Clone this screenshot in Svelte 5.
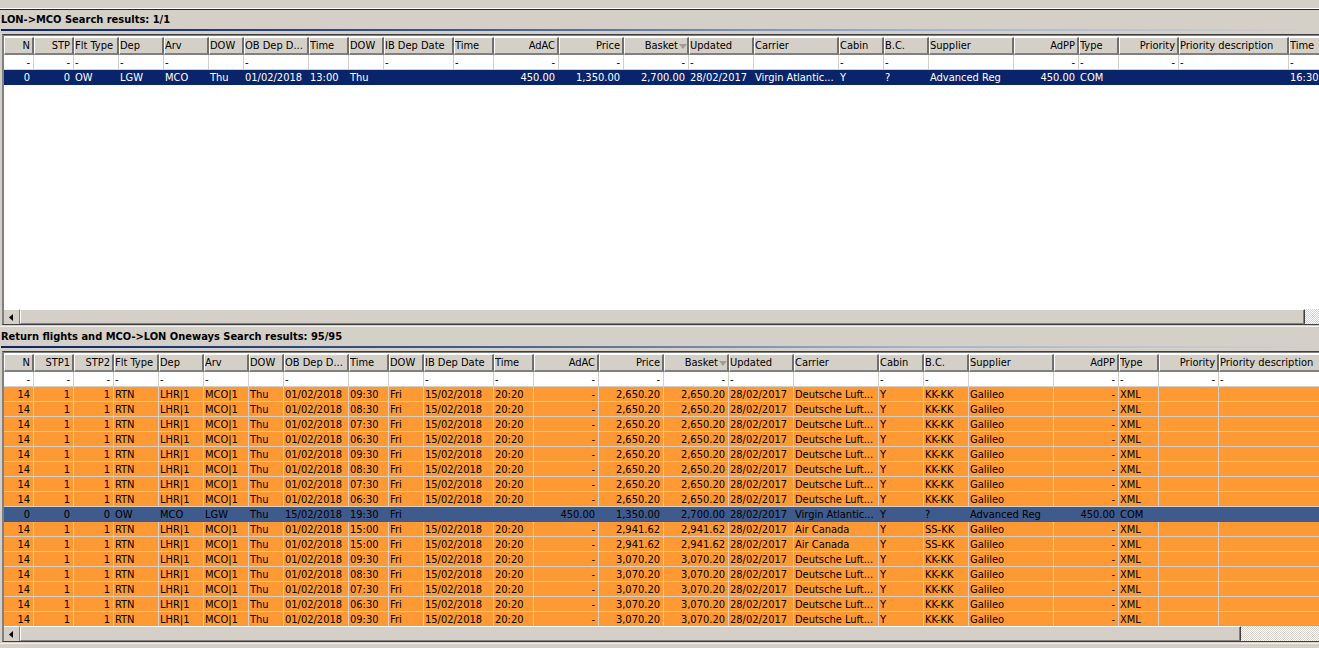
<script>
  const topCols = [
    ['N',30,'r'],['STP',40,'r'],['Flt Type',45],['Dep',45],['Arv',45],['DOW',35],['OB Dep D...',65],['Time',40],['DOW',35],['IB Dep Date',70],['Time',40],['AdAC',65,'r'],['Price',65,'r'],['Basket',65,'r'],['Updated',65],['Carrier',85],['Cabin',45],['B.C.',45],['Supplier',85],['AdPP',65,'r'],['Type',40],['Priority',60,'r'],['Priority description',110],['Time',40]
  ].map(([label,w,align]) => ({label,w,align}));
  const botCols = [
    ['N',30,'r'],['STP1',40,'r'],['STP2',40,'r'],['Flt Type',45],['Dep',45],['Arv',45],['DOW',35],['OB Dep D...',65],['Time',40],['DOW',35],['IB Dep Date',70],['Time',40],['AdAC',65,'r'],['Price',65,'r'],['Basket',65,'r'],['Updated',65],['Carrier',85],['Cabin',45],['B.C.',45],['Supplier',85],['AdPP',65,'r'],['Type',40],['Priority',60,'r'],['Priority description',110]
  ].map(([label,w,align]) => ({label,w,align}));

  const topFilter = ['-','-','-','-','-','','-','','','-','-','-','-','-','-','','-','-','','-','-','-','-','-'];
  const botFilter = ['-','-','-','-','-','-','','-','','','-','-','-','-','-','-','','-','-','','-','-','-','-'];
  const topRows = [{kind:'sel',cells:['0','0','OW','LGW','MCO','Thu','01/02/2018','13:00','Thu','','','450.00','1,350.00','2,700.00','28/02/2017','Virgin Atlantic...','Y','?','Advanced Reg','450.00','COM','','','16:30']}];

  const ret = (time, price, carrier='Deutsche Luft...', bc='KK-KK') => ({kind:'orange',cells:['14','1','1','RTN','LHR|1','MCO|1','Thu','01/02/2018',time,'Fri','15/02/2018','20:20','-',price,price,'28/02/2017',carrier,'Y',bc,'Galileo','-','XML','','']});
  const p1='2,650.20', p2='2,941.62', p3='3,070.20';
  const botRows = [
    ret('09:30',p1),ret('08:30',p1),ret('07:30',p1),ret('06:30',p1),
    ret('09:30',p1),ret('08:30',p1),ret('07:30',p1),ret('06:30',p1),
    {kind:'oneway',cells:['0','0','0','OW','MCO','LGW','Thu','15/02/2018','19:30','Fri','','','450.00','1,350.00','2,700.00','28/02/2017','Virgin Atlantic...','Y','?','Advanced Reg','450.00','COM','','']},
    ret('15:00',p2,'Air Canada','SS-KK'),ret('15:00',p2,'Air Canada','SS-KK'),
    ret('09:30',p3),ret('08:30',p3),ret('07:30',p3),ret('06:30',p3),ret('09:30',p3)
  ];
  const panels = [
    {title:'LON->MCO Search results: 1/1',cols:topCols,filter:topFilter,rows:topRows,cls:'first',thumb:1285},
    {title:'Return flights and MCO->LON Oneways Search results: 95/95',cols:botCols,filter:botFilter,rows:botRows,cls:'second',thumb:1221}
  ];
</script>

<div class="page">
  {#each panels as p}
    <section class="panel {p.cls}">
      <h2 class="title">{p.title}</h2>
      <div class="rule"></div>
      <div class="frame">
        <div class="grid">
          <div class="row head">
            {#each p.cols as c}
              <div class="hcell" class:r={c.align==='r'} style="width:{c.w}px">
                <span>{c.label}</span>
                {#if c.label==='Basket'}<svg class="sort" width="8" height="5" viewBox="0 0 8 5"><path d="M0 0h8L4 5z" fill="#a09c94"/></svg>{/if}
              </div>
            {/each}
          </div>
          <div class="row filter">
            {#each p.cols as c, i}
              <div class="cell" class:r={c.align==='r'} style="width:{c.w}px">{p.filter[i]}</div>
            {/each}
          </div>
          {#each p.rows as row}
            <div class="row {row.kind}">
              {#each p.cols as c, i}
                <div class="cell" class:r={c.align==='r'} style="width:{c.w}px">{row.cells[i]}</div>
              {/each}
            </div>
          {/each}
        </div>
        <div class="scrollbar">
          <div class="arrow"><svg width="5" height="7" viewBox="0 0 5 7"><path d="M4 0v7L0 3.5z" fill="#000"/></svg></div>
          <div class="thumb" style="width:{p.thumb}px"></div>
          <div class="track"></div>
        </div>
      </div>
    </section>
  {/each}
  <div class="foot"></div>
</div>

<style>
  :global(body) { margin: 0; background: #d4d0c8; overflow: hidden; }
  .page {
    width: 1319px;
    height: 648px;
    overflow: hidden;
    background: #d4d0c8;
    font: 11px/15px "DejaVu Sans Condensed", "DejaVu Sans", sans-serif;
    color: #000;
    padding-top: 9px;
    box-sizing: border-box;
  }
  .panel { display: flex; flex-direction: column; height: 316px; box-sizing: border-box; }
  .first { border-top: 1px solid #0a246a; box-shadow: 0 -1px 0 #fff; }
  .second { margin-top: 1px; border-top: 1px solid #f4f2ee; }
  .foot { margin-top: 1px; border-top: 1px solid #f4f2ee; }
  .title {
    margin: 0;
    height: 19px;
    padding-left: 1px;
    font-size: 11px;
    line-height: 19px;
    font-weight: bold;
    white-space: nowrap;
  }
  .rule {
    height: 2px;
    margin: 0 0 3px 1px;
    background: linear-gradient(90deg, #0a246a 0%, #3f5a8c 35%, #a6b4d0 70%, #d4d0c8 100%);
  }
  .frame {
    flex: 1;
    min-height: 0;
    margin-left: 2px;
    border-top: 1px solid #404040;
    border-left: 1px solid #808080;
    border-bottom: 1px solid #404040;
    box-shadow: inset 1px 1px 0 #808080;
    display: flex;
    flex-direction: column;
    padding: 2px 0 0 1px;
    background: #fff;
  }
  .grid { flex: 1; min-height: 0; overflow: hidden; background: #fff; }
  .row { display: flex; width: max-content; }
  .head { height: 18px; }
  .hcell {
    box-sizing: border-box;
    flex: none;
    height: 18px;
    padding: 1px 2px 0 0;
    background: #d4d0c8;
    border-top: 1px solid #fff;
    border-left: 1px solid #fff;
    border-right: 2px solid #707070;
    border-bottom: 2px solid #808080;
    line-height: 14px;
    white-space: nowrap;
    overflow: hidden;
    display: flex;
    align-items: center;
    gap: 1px;
  }
  .hcell.r { justify-content: flex-end; }
  .sort { flex: none; margin-right: -2px; }
  .cell {
    box-sizing: border-box;
    flex: none;
    height: 15px;
    padding: 1px 2px 0 1px;
    border-right: 1px solid #d4d0c8;
    border-bottom: 1px solid #d4d0c8;
    line-height: 14px;
    white-space: nowrap;
    overflow: hidden;
  }
  .cell.r { text-align: right; padding-right: 3px; }
  .orange .cell { background: #ff9933; }
  .sel .cell { background: #0a246a; color: #fff; border-color: #0a246a; }
  .oneway .cell { background: #3f5a8c; border-color: #3f5a8c; }
  .scrollbar { flex: none; height: 15px; display: flex; background: #fff; }
  .arrow {
    box-sizing: border-box;
    flex: none;
    width: 16px;
    background: #d4d0c8;
    border-top: 1px solid #fff;
    border-right: 1px solid #808080;
    display: flex;
    align-items: center;
    justify-content: center;
  }
  .thumb {
    box-sizing: border-box;
    flex: none;
    background: #d4d0c8;
    border-top: 1px solid #fff;
    border-left: 1px solid #fff;
    border-right: 1px solid #404040;
    border-bottom: 1px solid #808080;
    box-shadow: inset -1px 0 0 #808080;
  }
  .track {
    flex: 1;
    background-color: #fff;
    background-image: repeating-conic-gradient(#d4d0c8 0 25%, #fff 0 50%);
    background-size: 2px 2px;
  }
</style>
